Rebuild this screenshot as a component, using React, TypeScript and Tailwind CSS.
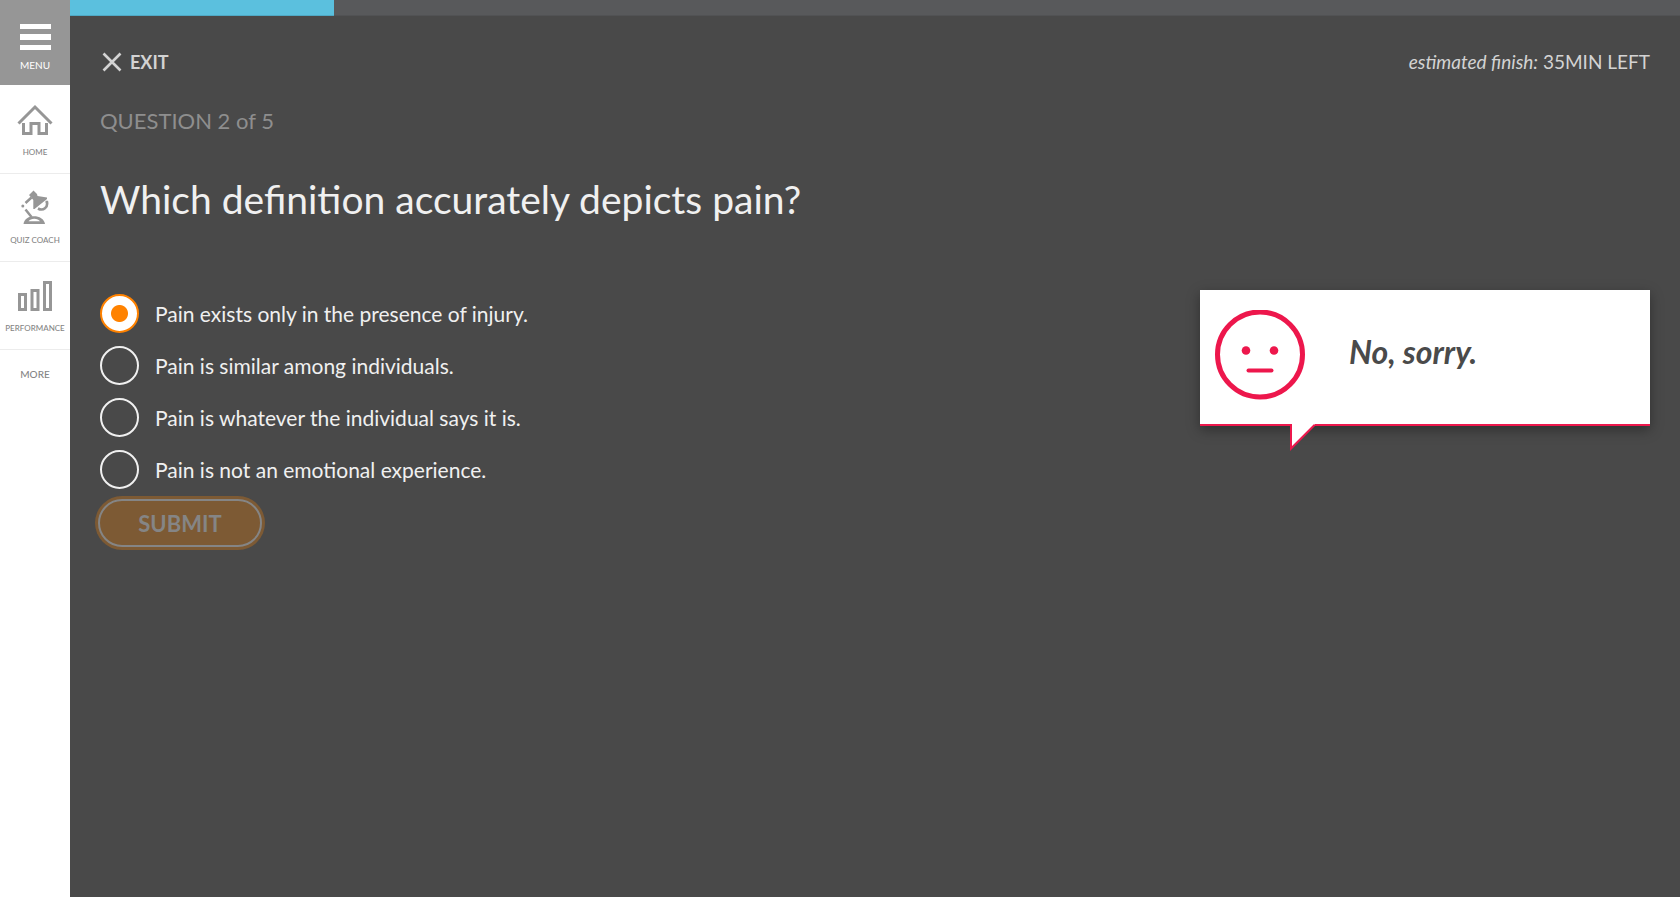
import { useState } from "react";
import type { ReactNode } from "react";

const options = [
  "Pain exists only in the presence of injury.",
  "Pain is similar among individuals.",
  "Pain is whatever the individual says it is.",
  "Pain is not an emotional experience.",
];

function HomeIcon() {
  return (
    <svg className="h-8 w-9" viewBox="0 0 36 32" fill="none" stroke="#969696" aria-hidden="true">
      <path d="M1.500 19.500 18 3 34.500 19.500" strokeWidth="3" />
      <path d="M6.500 19v10.500h7.500V19.500h8v10h7.500V19" strokeWidth="3" />
    </svg>
  );
}

function LampIcon() {
  return (
    <svg className="h-9 w-7" viewBox="0 0 28 36" fill="none" aria-hidden="true">
      <path d="M8 5 12.500.500 16 4l.5 2 9.500 1.500v1.500L13.500 19h-1.200V10Z" fill="#969696" />
      <path d="M10.500 7.500 4.500 13M4.500 19.500 10.500 27" stroke="#969696" strokeWidth="2.500" />
      <circle cx="1.800" cy="16" r="1.500" fill="#969696" />
      <path d="M24.500 12h1.500c1 5-3.500 9.500-9 6.500" stroke="#969696" strokeWidth="2.600" />
      <path d="M2.500 34C3.500 23.500 22.500 23.500 24 34Z" fill="#969696" />
      <path d="M7.500 31.300c2-3.500 9.500-3.500 11.500 0Z" fill="#fff" />
    </svg>
  );
}

function BarsIcon() {
  return (
    <svg className="h-8 w-9" viewBox="0 0 36 32" fill="none" stroke="#969696" strokeWidth="3" aria-hidden="true">
      <rect x="2.500" y="14.500" width="6" height="15" />
      <rect x="15" y="10.500" width="6" height="19" />
      <rect x="27.500" y="2.500" width="6" height="27" />
    </svg>
  );
}

function NavItem({ label, children }: { label: string; children: ReactNode }) {
  return (
    <li className="border-b border-[#ececec]">
      <a href="#" className="flex h-[87px] flex-col items-center justify-end pb-[15px]">
        <span className="flex h-9 items-center">{children}</span>
        <span className="mt-2 text-[8px] leading-3 whitespace-nowrap text-[#858585]">{label}</span>
      </a>
    </li>
  );
}

function Sidebar() {
  return (
    <nav className="w-[70px] shrink-0 bg-white">
      <button type="button" className="flex h-[85px] w-full flex-col items-center bg-[#969696] pt-6 text-white">
        <span className="flex w-[31px] flex-col gap-[5px]">
          <span className="h-[5px] bg-white" />
          <span className="h-[6px] bg-white" />
          <span className="h-[5px] bg-white" />
        </span>
        <span className="mt-[7px] text-[10px] leading-4">MENU</span>
      </button>
      <ul className="pt-px font-medium">
        <NavItem label="HOME"><HomeIcon /></NavItem>
        <NavItem label="QUIZ COACH"><LampIcon /></NavItem>
        <NavItem label="PERFORMANCE"><BarsIcon /></NavItem>
      </ul>
      <a href="#" className="block py-4 text-center text-[10px] leading-4 font-medium text-[#858585]">MORE</a>
    </nav>
  );
}

function Feedback() {
  return (
    <aside className="relative flex h-[136px] w-[450px] shrink-0 items-start border-b-2 border-[#ed174c] bg-white px-[15px] pt-5 shadow-[0_4px_12px_rgba(0,0,0,0.35)]">
      <svg className="size-[90px]" viewBox="0 0 90 90" role="img" aria-label="Neutral face">
        <circle cx="45" cy="44.500" r="42.500" fill="none" stroke="#ed174c" strokeWidth="5" />
        <circle cx="31" cy="40.500" r="4.300" fill="#ed174c" />
        <circle cx="59" cy="40.500" r="4.300" fill="#ed174c" />
        <path d="M33.500 60.500h23" stroke="#ed174c" strokeWidth="4" strokeLinecap="round" />
      </svg>
      <p className="ml-[44px] pt-6 text-[32px] leading-9 font-bold text-[#4a4a4a] italic">No, sorry.</p>
      <svg className="absolute top-[134px] left-[90px] h-[27px] w-[25px]" viewBox="0 0 25 27" aria-hidden="true">
        <path d="M1 0V24.500L24.500 1V0Z" fill="#fff" />
        <path d="M1 0V24.500L24.500 1" fill="none" stroke="#ed174c" strokeWidth="2" />
      </svg>
    </aside>
  );
}

export default function App() {
  const [selected, setSelected] = useState(0);

  return (
    <div className="flex min-h-screen bg-[#494949] font-['Lato',sans-serif]">
      <Sidebar />
      <div className="min-w-0 flex-1">
        <div
          role="progressbar"
          aria-label="Quiz progress"
          aria-valuenow={16}
          className="h-4 border-b border-[#515254] bg-[#58595b]"
        >
          <div className="h-4 w-[16.4%] border-b border-[#4fa9c5] bg-[#5bc0de]" />
        </div>
        <main className="px-[30px] pt-[34px]">
          <header className="flex items-center justify-between text-[#d3d3d3]">
            <button type="button" className="flex items-center gap-2 pl-[2px] text-[18px] leading-6 font-bold">
              <svg className="size-5" viewBox="0 0 20 20" fill="none" stroke="#d3d3d3" strokeWidth="2.600" aria-hidden="true">
                <path d="m1.500 1.500 17 17M18.500 1.500l-17 17" />
              </svg>
              EXIT
            </button>
            <p className="text-[19px] leading-6">
              <i>estimated finish:</i> 35MIN LEFT
            </p>
          </header>
          <p className="mt-[31px] text-[22px] leading-8 text-[#8e8e8e]">QUESTION 2 of 5</p>
          <h1 className="mt-9 text-[39px] leading-[52px] text-[#f0f0f0]">
            Which definition accurately depicts pain?
          </h1>
          <div className="mt-[65px] flex items-start justify-between gap-8">
            <form onSubmit={(e) => e.preventDefault()} className="pt-1">
              <fieldset aria-label="Answers" className="flex flex-col gap-[13px]">
                {options.map((text, i) => (
                  <label key={text} className="flex items-center gap-4 text-[21px] leading-7 text-[#f0f0f0]">
                    <input
                      type="radio"
                      name="answer"
                      checked={selected === i}
                      onChange={() => setSelected(i)}
                      className="size-[39px] shrink-0 appearance-none rounded-full border-2 border-[#f0f0f0] checked:border-[#ff8200] checked:bg-white checked:bg-[radial-gradient(circle,#ff8200_8px,transparent_9px)]"
                    />
                    {text}
                  </label>
                ))}
              </fieldset>
              <button
                type="submit"
                disabled
                className="mt-[10px] -ml-[2px] h-12 w-[164px] rounded-full border-2 border-[#858585] bg-[#7d5a34] text-[22px] font-bold text-[#858585] ring-3 ring-[#7d5a34]"
              >
                SUBMIT
              </button>
            </form>
            <Feedback />
          </div>
        </main>
      </div>
    </div>
  );
}
